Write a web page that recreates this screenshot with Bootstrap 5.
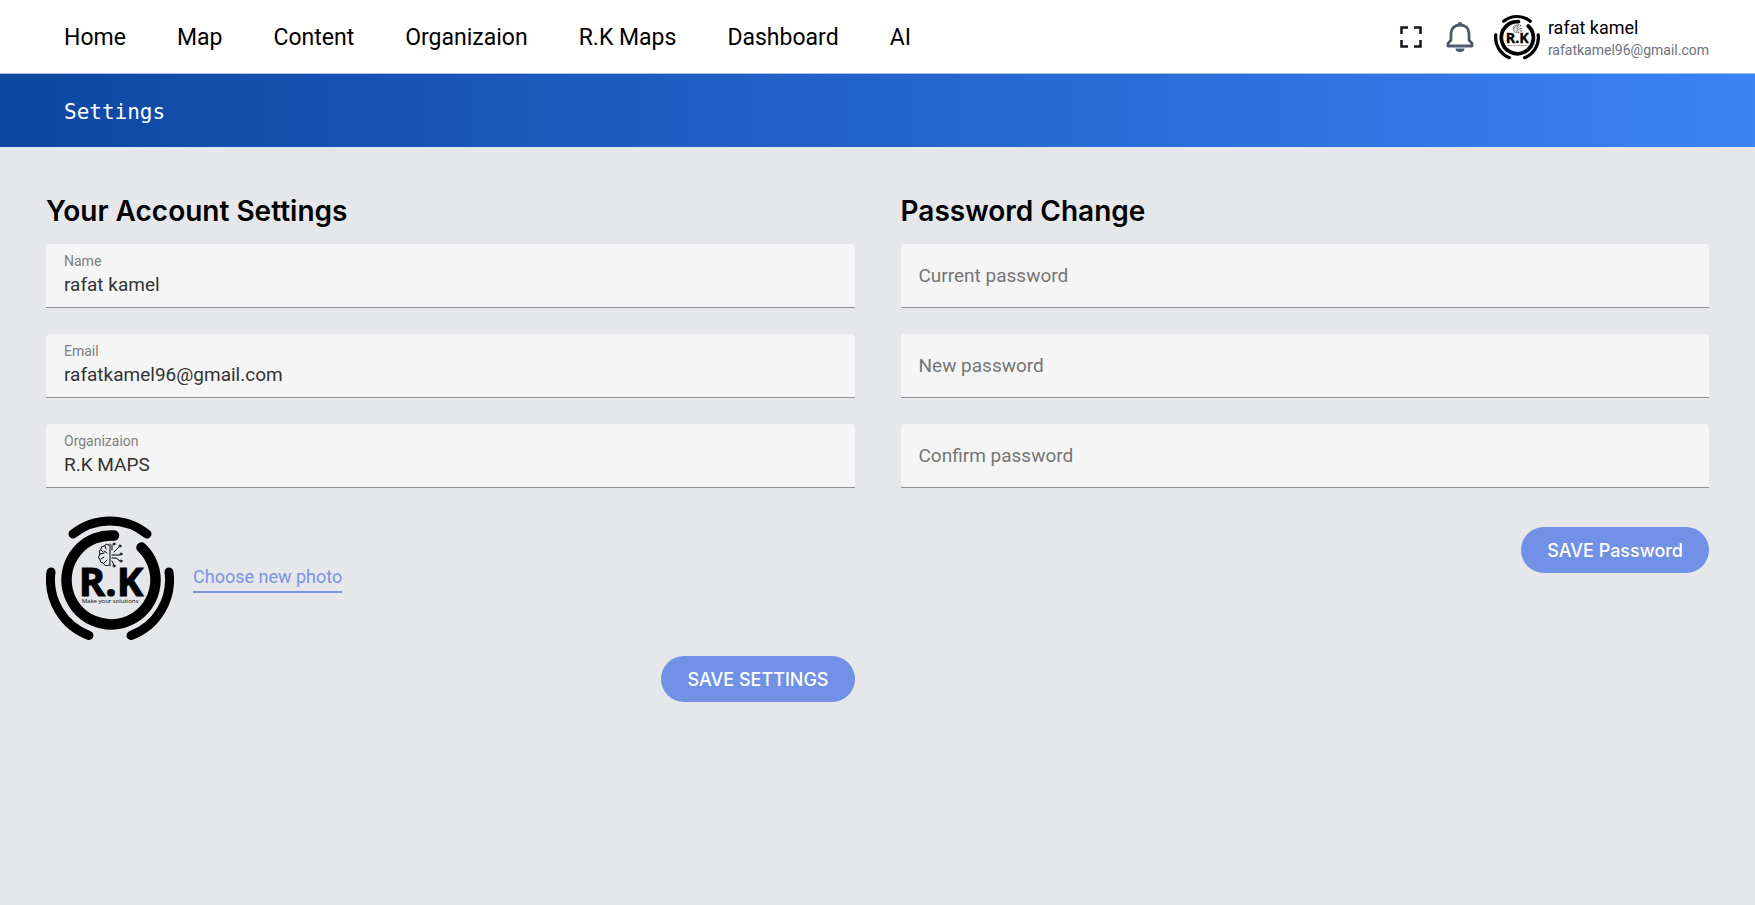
<!DOCTYPE html>
<html lang="en">
<head>
<meta charset="utf-8">
<meta name="viewport" content="width=device-width, initial-scale=1">
<title>Settings</title>
<link href="https://cdn.jsdelivr.net/npm/bootstrap@5.3.0/dist/css/bootstrap.min.css" rel="stylesheet">
<style>
  body { background: #e5e7eb; color: #000; font-family: Roboto, "Noto Sans", sans-serif; font-size: 18px; }
  .topbar { background: #fff; min-height: 74px; padding: 0 46px 0 64px; border-bottom: 1px solid #a9bfe3; }
  .main-nav { gap: 8px 51px; font-size: 23px; padding-top: 4px; }
  .main-nav a { color: #000; text-decoration: none; }
  .icon-btn { background: none; border: 0; padding: 0; display: flex; }
  .tools { gap: 20px; }
  .user-text { padding-top: 2px; }
  .user-name { font-size: 18px; line-height: 24px; }
  .user-mail { font-size: 14px; line-height: 20px; color: #6b7280; }
  .page-title { min-height: 73px; padding: 4px 64px 0; background: linear-gradient(90deg, #0d47a1, #3b82f6); }
  .page-title h1 { font-family: "DejaVu Sans Mono", monospace; font-size: 21px; color: #fff; font-weight: 400; }
  .settings { padding: 46px; }
  .settings > .row { --bs-gutter-x: 46px; --bs-gutter-y: 46px; }
  h2 { font-family: Inter, Roboto, sans-serif; font-size: 28px; line-height: 36px; font-weight: 600; margin-bottom: 15px; }
  .field { background: #f5f5f5; border-bottom: 1px solid #8f9093; border-radius: 4px 4px 0 0; height: 64px; padding: 0 18px; margin-bottom: 26px; }
  .field label { font-size: 14px; line-height: 18px; padding-top: 8px; color: #7d7f80; }
  .field input { border: 0; outline: 0; background: transparent; width: 100%; padding: 0; font-size: 19px; line-height: 30px; color: #333; }
  .field.resting input { height: 63px; }
  .field.resting label { padding: 0 18px; font-size: 19px; line-height: 63px; color: #757575; pointer-events: none; }
  .field.resting:focus-within label, .field.resting input:valid + label { font-size: 14px; line-height: 32px; }
  .photo-row { gap: 19px; margin-bottom: 14px; }
  .photo-link { color: #7a94e2; text-decoration: none; border-bottom: 2px solid #7a94e2; line-height: 28px; }
  .save-btn { background: #7191e6; color: #fff; border: 0; border-radius: 23px; min-height: 46px; padding: 0 26px; font-family: Inter, Roboto, sans-serif; font-size: 18px; font-weight: 500; }
  .save-row { padding-top: 13px; }
</style>
</head>
<body>
<svg class="d-none" xmlns="http://www.w3.org/2000/svg">
  <symbol id="rk-logo" viewBox="-64 -66 128 128">
    <g fill="none" stroke="#000" stroke-linecap="round">
      <g stroke-width="9">
        <path d="M-37-46A59 59 0 0 1 37-46"/>
        <path d="M-59-8A59.400 59.400 0 0 0-21 55.500"/>
        <path d="M59-8A59.400 59.400 0 0 1 21 55.500"/>
      </g>
      <path stroke-width="10.500" d="M4-44.500A44.500 44.500 0 1 0 31.500-32.500"/>
      <g stroke-width="1">
        <path d="M0-36v22m-1-21q-3-2-5 1q-3 0-3 3q-3 2-1 5q-3 3 0 6q0 3 3 3q2 4 6 2M-9-30l2 2m2-6l1 3m-6 5l4-1m-3 6l3-2m0 6l3-3m-3-9l3 2M2-30v-5M4-28l5-5M2-25h8M2-22h4l4 3M2-19l2 4"/>
        <circle cx="10" cy="-34" r="1"/><circle cx="4" cy="-36" r="1"/><circle cx="11" cy="-26" r="1"/><circle cx="11" cy="-19" r="1"/><circle cx="4" cy="-14" r="1"/>
      </g>
    </g>
    <text x="1" y="16" text-anchor="middle" font-family="Open Sans, Noto Sans, sans-serif" font-weight="700" font-size="40" stroke="#000" stroke-width="1">R.K</text>
    <text x="0" y="23" text-anchor="middle" font-family="Open Sans, Noto Sans, sans-serif" font-size="6">Make your solutions</text>
  </symbol>
</svg>

<header class="topbar d-flex flex-wrap align-items-center justify-content-between">
  <nav class="main-nav d-flex flex-wrap" aria-label="Main">
    <a href="#">Home</a><a href="#">Map</a><a href="#">Content</a><a href="#">Organizaion</a><a href="#">R.K Maps</a><a href="#">Dashboard</a><a href="#">AI</a>
  </nav>
  <div class="tools d-flex align-items-center">
    <button class="icon-btn me-1" type="button" aria-label="Full screen">
      <svg width="22" height="22" viewBox="0 0 22 22" fill="none" stroke="#1b1220" stroke-width="2.500"><path d="M1.500 8V1.500H8M14 1.500h6.500V8M20.500 14v6.500H14M8 20.500H1.500V14"/></svg>
    </button>
    <button class="icon-btn" type="button" aria-label="Notifications">
      <svg width="28" height="32" viewBox="0 0 28 32"><path d="M2 25v-2.500l3-3.500v-6.500C5 7.500 8.500 4 14 4S23 7.500 23 12.500V19l3 3.500V25z" fill="none" stroke="#4b5b6e" stroke-width="2.800" stroke-linejoin="round"/><path d="M11.500 3.500a2.500 2.500 0 0 1 5 0M9.500 27.500h9a4.500 3.500 0 0 1-9 0" fill="#4b5b6e"/></svg>
    </button>
    <div class="d-flex align-items-center gap-2">
      <svg width="46" height="46" role="img" aria-label="rafat kamel"><use href="#rk-logo"/></svg>
      <div class="user-text">
        <div class="user-name">rafat kamel</div>
        <div class="user-mail">rafatkamel96@gmail.com</div>
      </div>
    </div>
  </div>
</header>

<div class="page-title d-flex align-items-center"><h1 class="m-0">Settings</h1></div>

<main class="settings">
  <div class="row">
    <form class="col-12 col-md-6">
      <h2>Your Account Settings</h2>
      <div class="field"><label class="d-block" for="name">Name</label><input class="d-block" id="name" type="text" value="rafat kamel"></div>
      <div class="field"><label class="d-block" for="email">Email</label><input class="d-block" id="email" type="email" value="rafatkamel96@gmail.com"></div>
      <div class="field"><label class="d-block" for="org">Organizaion</label><input class="d-block" id="org" type="text" value="R.K MAPS"></div>
      <div class="photo-row d-flex align-items-center">
        <svg width="128" height="128" role="img" aria-label="Profile photo"><use href="#rk-logo"/></svg>
        <a class="photo-link" href="#">Choose new photo</a>
      </div>
      <div class="text-end"><button class="save-btn" type="submit">SAVE SETTINGS</button></div>
    </form>
    <form class="col-12 col-md-6">
      <h2>Password Change</h2>
      <div class="field resting position-relative"><input id="pw" type="password" required><label class="position-absolute top-0 start-0" for="pw">Current password</label></div>
      <div class="field resting position-relative"><input id="pw-new" type="password" required><label class="position-absolute top-0 start-0" for="pw-new">New password</label></div>
      <div class="field resting position-relative"><input id="pw-ok" type="password" required><label class="position-absolute top-0 start-0" for="pw-ok">Confirm password</label></div>
      <div class="save-row text-end"><button class="save-btn" type="submit">SAVE Password</button></div>
    </form>
  </div>
</main>
<script src="https://cdn.jsdelivr.net/npm/bootstrap@5.3.0/dist/js/bootstrap.bundle.min.js"></script>
</body>
</html>
